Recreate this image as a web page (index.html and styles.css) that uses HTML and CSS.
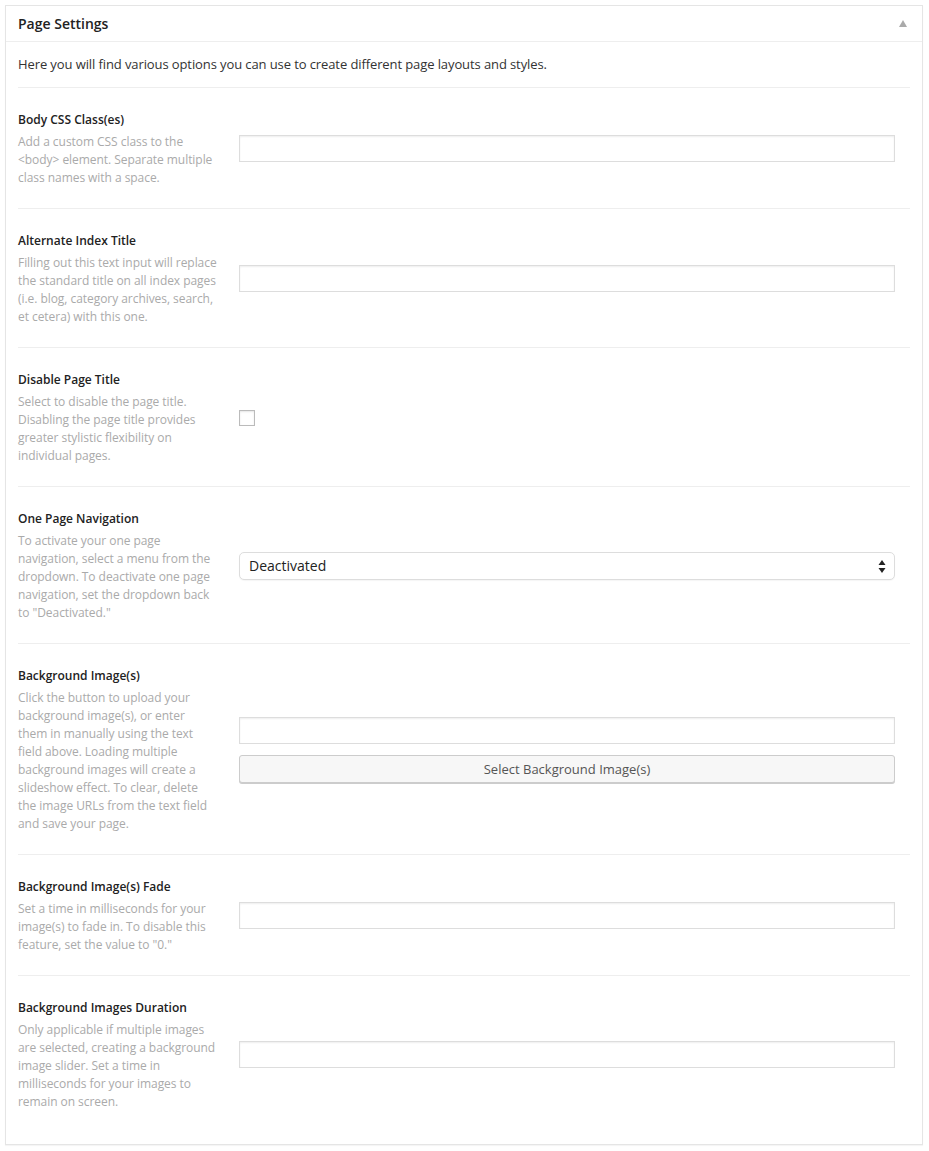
FILE: index.html
```html
<!DOCTYPE html>
<html lang="en">
<head>
    <meta charset="UTF-8">
    <meta name="viewport" content="width=device-width, initial-scale=1.0">
    <title>Page Settings</title>
    <link rel="stylesheet" href="styles.css">
</head>
<body>

<div class="postbox">
    <!-- Box header -->
    <div class="box-header">
        <h2>Page Settings</h2>
        <span class="toggle-arrow"></span>
    </div>

    <div class="box-inside">
        <p class="intro">Here you will find various options you can use to create different page layouts and styles.</p>

        <div class="option-row">
            <div class="option-label">
                <h4>Body CSS Class(es)</h4>
                <p>Add a custom CSS class to the &lt;body&gt; element. Separate multiple class names with a space.</p>
            </div>
            <div class="option-field">
                <input type="text" class="text-input">
            </div>
        </div>

        <div class="option-row">
            <div class="option-label">
                <h4>Alternate Index Title</h4>
                <p>Filling out this text input will replace the standard title on all index pages (i.e. blog, category archives, search, et cetera) with this one.</p>
            </div>
            <div class="option-field">
                <input type="text" class="text-input">
            </div>
        </div>

        <div class="option-row">
            <div class="option-label">
                <h4>Disable Page Title</h4>
                <p>Select to disable the page title. Disabling the page title provides greater stylistic flexibility on individual pages.</p>
            </div>
            <div class="option-field">
                <input type="checkbox" class="check-input">
            </div>
        </div>

        <div class="option-row">
            <div class="option-label">
                <h4>One Page Navigation</h4>
                <p>To activate your one page navigation, select a menu from the dropdown. To deactivate one page navigation, set the dropdown back to "Deactivated."</p>
            </div>
            <div class="option-field">
                <div class="select-wrap">
                    <select class="select-input">
                        <option>Deactivated</option>
                    </select>
                    <svg class="select-arrows" width="8" height="13" viewBox="0 0 8 13">
                        <path d="M4 0 L7.5 5 L0.5 5 Z" fill="#222"/>
                        <path d="M4 13 L7.5 8 L0.5 8 Z" fill="#222"/>
                    </svg>
                </div>
            </div>
        </div>

        <div class="option-row">
            <div class="option-label">
                <h4>Background Image(s)</h4>
                <p>Click the button to upload your background image(s), or enter them in manually using the text field above. Loading multiple background images will create a slideshow effect. To clear, delete the image URLs from the text field and save your page.</p>
            </div>
            <div class="option-field stacked">
                <input type="text" class="text-input">
                <button class="upload-button">Select Background Image(s)</button>
            </div>
        </div>

        <div class="option-row">
            <div class="option-label">
                <h4>Background Image(s) Fade</h4>
                <p>Set a time in milliseconds for your image(s) to fade in. To disable this feature, set the value to "0."</p>
            </div>
            <div class="option-field">
                <input type="text" class="text-input">
            </div>
        </div>

        <div class="option-row last">
            <div class="option-label">
                <h4>Background Images Duration</h4>
                <p>Only applicable if multiple images are selected, creating a background image slider. Set a time in milliseconds for your images to remain on screen.</p>
            </div>
            <div class="option-field">
                <input type="text" class="text-input">
            </div>
        </div>
    </div>
</div>

</body>
</html>
```

FILE: styles.css
```css
/* Global Styles */
body {
    margin: 0;
    padding: 5px 6px 6px 5px;
    font-family: "Open Sans", Arial, sans-serif;
    background-color: #fff;
    color: #333;
}
.postbox {
    border: 1px solid #e5e5e5;
    background-color: #fff;
    box-shadow: 0 1px 1px rgba(0, 0, 0, 0.04);
}
/* Header */
.box-header {
    display: flex;
    justify-content: space-between;
    align-items: center;
    height: 35px;
    padding: 0 12px;
    border-bottom: 1px solid #eee;
}
.box-header h2 {
    margin: 0;
    font-size: 14px;
    font-weight: 600;
    color: #222;
}
.toggle-arrow {
    width: 0;
    height: 0;
    margin-right: 3px;
    border-left: 4px solid transparent;
    border-right: 4px solid transparent;
    border-bottom: 7px solid #aaa;
}
/* Content */
.box-inside {
    padding: 0 12px 12px;
}
.intro {
    margin: 0;
    padding: 13px 0 14px;
    font-size: 13px;
    line-height: 18px;
    letter-spacing: -0.1px;
    color: #333;
    border-bottom: 1px solid #eee;
}
.option-row {
    display: grid;
    grid-template-columns: 199px 656px;
    column-gap: 22px;
    align-items: center;
    padding: 22px 0 21px;
    border-bottom: 1px solid #eee;
}
.option-row.last {
    border-bottom: none;
    padding-bottom: 21px;
}
.option-label h4 {
    margin: 0 0 4px;
    padding-top: 1px;
    font-size: 12px;
    font-weight: 600;
    line-height: 18px;
    color: #222;
}
.option-label p {
    margin: 0;
    font-size: 12px;
    line-height: 18px;
    letter-spacing: -0.05px;
    color: #aaa;
}
.option-field.stacked {
    display: flex;
    flex-direction: column;
    gap: 11px;
}
/* Inputs */
.text-input {
    box-sizing: border-box;
    width: 100%;
    height: 27px;
    margin: 0;
    padding: 3px 6px;
    font-family: inherit;
    font-size: 14px;
    border: 1px solid #ddd;
    border-radius: 0;
    background-color: #fff;
    box-shadow: inset 0 1px 2px rgba(0, 0, 0, 0.07);
    outline: none;
}
.check-input {
    appearance: none;
    -webkit-appearance: none;
    box-sizing: border-box;
    display: block;
    width: 16px;
    height: 16px;
    margin: 0;
    border: 1px solid #bbb;
    background-color: #fff;
    box-shadow: inset 0 1px 2px rgba(0, 0, 0, 0.1);
}
.select-wrap {
    position: relative;
}
.select-input {
    appearance: none;
    -webkit-appearance: none;
    box-sizing: border-box;
    width: 656px;
    height: 28px;
    margin: 0;
    padding: 0 30px 0 9px;
    font-family: inherit;
    font-size: 14px;
    color: #222;
    border: 1px solid #ddd;
    border-radius: 5px;
    background-color: #fff;
    box-shadow: 0 1px 1px rgba(0, 0, 0, 0.04);
    outline: none;
}
.select-arrows {
    position: absolute;
    right: 9px;
    top: 8px;
    pointer-events: none;
}
.upload-button {
    box-sizing: border-box;
    width: 656px;
    height: 28px;
    margin: 0;
    font-family: inherit;
    font-size: 13px;
    color: #555;
    border: 1px solid #ccc;
    border-radius: 3px;
    background-color: #f7f7f7;
    box-shadow: 0 1px 0 #ccc;
    cursor: pointer;
}
```
